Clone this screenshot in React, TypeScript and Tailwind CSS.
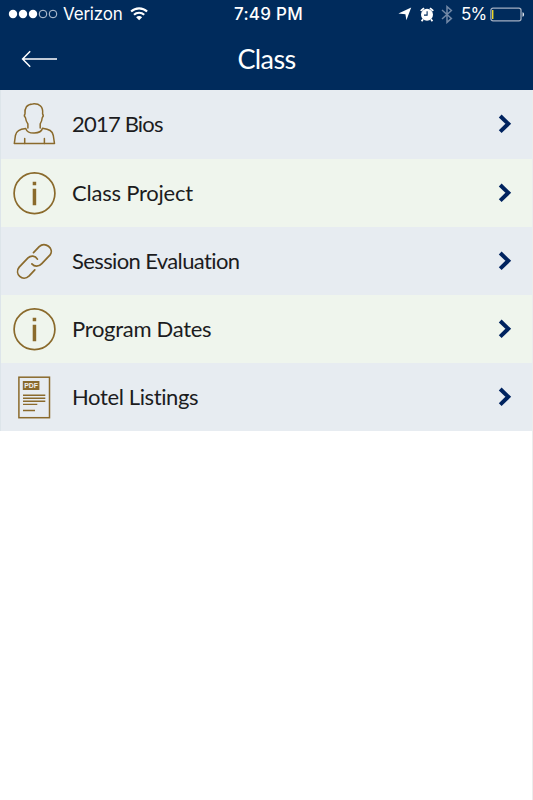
import type { ReactNode } from "react";

const GOLD = "#8a6a2c";

function IconFrame({ children }: { children: ReactNode }) {
  return (
    <svg
      viewBox="0 0 70 68"
      className="h-[68px] w-[70px] shrink-0"
      fill="none"
      stroke={GOLD}
      strokeWidth={1.5}
      strokeLinecap="round"
      strokeLinejoin="round"
      aria-hidden="true"
    >
      {children}
    </svg>
  );
}

function PersonIcon() {
  return (
    <IconFrame>
      <path d="M27.9 38V33.9C26.4 32.1 25.8 30.1 25.4 27.5C24.4 26.7 24.2 25.1 25 23.9C24.5 17.9 26.8 14.2 32.6 13.9C39.6 13.2 43.4 16.8 42.6 23.9C43.5 25.2 43.3 26.6 42.3 27.5C42 30.1 41.4 32.1 40.2 33.9V38" />
      <path d="M25.8 38.6C19.5 39.4 16.3 40.7 15.4 45.5L14.3 53.6H54.5L53.3 45.5C52.4 40.7 49.3 39.4 42.5 38.3C41 44.3 27.7 44.9 25.8 38.6Z" />
      <path d="M24.7 48.6V53.5M44.4 48.6V53.5" />
    </IconFrame>
  );
}

function InfoIcon() {
  return (
    <IconFrame>
      <circle cx="34.5" cy="34.2" r="20.4" strokeWidth={1.7} />
      <path d="M32.7 22.8h3.5v3.5h-3.5zM32.7 29.7h3.5v16.6h-3.5z" fill={GOLD} stroke="none" />
    </IconFrame>
  );
}

function LinkIcon() {
  return (
    <IconFrame>
      <path
        d="M33.5 25.7L39.2 19.7C45 14.1 54.6 21.5 50.1 27.9L41.8 36.6C38.5 40.2 34.4 39.8 31.9 36.9"
        strokeWidth={1.7}
      />
      <path
        d="M37.4 32.2C35.2 28.3 30.7 28.3 28 30.9L19.2 40.1C13.9 46.6 22.6 55.2 29.2 48.8L34.8 42.9"
        strokeWidth={1.7}
      />
    </IconFrame>
  );
}

function PdfIcon() {
  return (
    <IconFrame>
      <rect x="18.9" y="14.2" width="30.6" height="40.5" strokeLinejoin="miter" />
      <rect x="22.8" y="18" width="16.6" height="9" fill={GOLD} stroke="none" />
      <text
        x="24.2"
        y="25.2"
        textLength="13.8"
        lengthAdjust="spacingAndGlyphs"
        fill="#eef0f0"
        stroke="none"
        className="font-['Liberation_Sans',sans-serif] text-[7.5px] font-bold"
      >
        PDF
      </text>
      <path
        d="M23 32.2h22.3M23 35.2h22.3M23 38.2h22.3M23 41.4h14.3M23 47.5h12"
        strokeLinecap="butt"
        strokeWidth={1.4}
      />
    </IconFrame>
  );
}

function Chevron() {
  return (
    <svg viewBox="0 0 14 22" className="mr-5 h-[22px] w-[14px]" fill="none" aria-hidden="true">
      <path d="M2.2 3L10.3 10.8L2.2 18.6" stroke="#00235f" strokeWidth="4" />
    </svg>
  );
}

function StatusBar() {
  return (
    <div className="grid h-7 grid-cols-[1fr_auto_1fr] items-center font-['Inter',sans-serif] text-[17px] leading-7 text-white">
      <div className="flex items-center pl-[8px]">
        <svg viewBox="0 0 50 10" className="h-[10px] w-[50px]" fill="none" aria-hidden="true">
          <circle cx="5" cy="5" r="4.2" fill="#fff" />
          <circle cx="15" cy="5" r="4.2" fill="#fff" />
          <circle cx="25" cy="5" r="4.2" fill="#fff" />
          <circle cx="35" cy="5" r="3.8" stroke="#d5dce7" strokeWidth=".9" />
          <circle cx="45" cy="5" r="3.8" stroke="#d5dce7" strokeWidth=".9" />
        </svg>
        <span className="ml-[5px] w-[60px] tracking-[-0.2px]">Verizon</span>
        <svg viewBox="0 0 18 14" className="ml-[7px] h-[14px] w-[18px]" fill="none" stroke="#fff" strokeWidth="2.1" aria-hidden="true">
          <path d="M1.1 4.6C5.5.3 12.7.3 17.1 4.6" />
          <path d="M4 7.8C6.8 5 11.4 5 14.2 7.8" />
          <path d="M9.1 13.2L6.1 10.2C7.7 8.7 10.5 8.7 12.1 10.2Z" fill="#fff" stroke="none" />
        </svg>
      </div>
      <span className="w-[70px] text-center font-medium tracking-[0.25px] whitespace-nowrap">
        <span className="relative left-[2px]">7:49 PM</span>
      </span>
      <div className="flex items-center justify-end pr-[8px]">
        <svg viewBox="0 0 14 14" className="mr-[8px] h-[14px] w-[14px]" aria-hidden="true">
          <path d="M13.2 .6L8.4 13.2L7.4 7.3L.4 6.5Z" fill="#fff" />
        </svg>
        <svg viewBox="0 0 14 15" className="mr-[7px] h-[15px] w-[14px]" fill="none" aria-hidden="true">
          <circle cx="7" cy="7.7" r="6" fill="#fff" />
          <path d="M.7 3.9L4 1.1M13.3 3.9L10 1.1M3 12.2L1.6 14.2M11 12.2L12.4 14.2" stroke="#fff" strokeWidth="1.8" />
          <path d="M7.1 4.3V8.1H4" stroke="#002b5c" strokeWidth="1.1" />
        </svg>
        <svg viewBox="0 0 12 19" className="mr-[8px] h-[19px] w-[12px]" fill="none" stroke="#7188a6" strokeWidth="1.5" aria-hidden="true">
          <path d="M1 5L10.4 13.4L6 17.4V1.6L10.4 5.5L1 14" />
        </svg>
        <span className="w-[24px] tracking-[-0.8px]">5%</span>
        <svg viewBox="0 0 36 15" className="ml-[5px] h-[15px] w-[35px]" fill="none" aria-hidden="true">
          <rect x=".9" y=".9" width="31" height="13.2" rx="2.2" stroke="#a4b0c2" strokeWidth="1.3" />
          <path d="M2.8 2.8V12.2" stroke="#f5df27" strokeWidth="1.4" />
          <path d="M33.4 5.2C35.6 5.7 35.6 9.3 33.4 9.8Z" fill="#e1e6ed" />
        </svg>
      </div>
    </div>
  );
}

const ITEMS = [
  { label: "2017 Bios", icon: PersonIcon, text: "tracking-[-0.8px]" },
  { label: "Class Project", icon: InfoIcon, text: "tracking-[-0.22px]" },
  { label: "Session Evaluation", icon: LinkIcon, text: "tracking-[-0.62px]" },
  { label: "Program Dates", icon: InfoIcon, text: "tracking-[-0.3px]" },
  { label: "Hotel Listings", icon: PdfIcon, text: "tracking-[-0.38px]" },
];

export default function App() {
  return (
    <div className="min-h-[800px] w-full border-r border-[#ececec] bg-white font-['Lato',sans-serif]">
      <header className="-mr-px h-[90.4px] bg-[#002b5c]">
        <StatusBar />
        <div className="grid h-[62px] grid-cols-[1fr_auto_1fr] items-center text-white">
          <button aria-label="Back" className="ml-[21px] w-[38px]">
            <svg viewBox="0 0 38 18" className="h-[18px] w-[38px]" fill="none" stroke="#fff" strokeWidth="1.5">
              <path d="M9.2 1.3L1.6 9L9.2 16.7M1.6 9H36" />
            </svg>
          </button>
          <h1 className="text-[27px] leading-[60px] tracking-[-0.6px]">Class</h1>
        </div>
      </header>

      <ul>
        {ITEMS.map(({ label, icon: Icon, text }) => (
          <li
            key={label}
            className="flex h-[68.2px] items-center border-l border-[#dde5ea] odd:bg-[#e7ecf1] even:bg-[#eff5ed]"
          >
            <div className="-ml-px flex flex-1 items-center">
              <Icon />
              <span className={`ml-[2px] text-[22px] leading-7 text-[#1c1c1e] ${text}`}>{label}</span>
            </div>
            <Chevron />
          </li>
        ))}
      </ul>
    </div>
  );
}
